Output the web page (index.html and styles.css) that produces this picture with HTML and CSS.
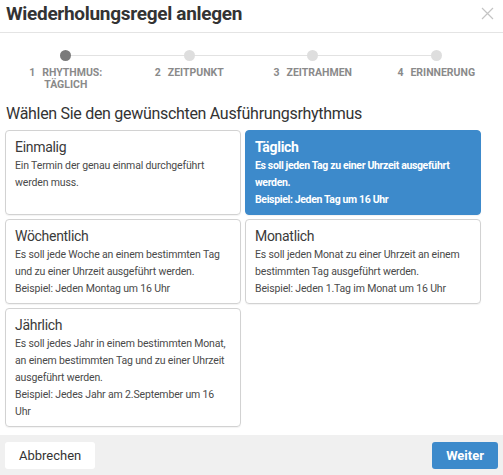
FILE: index.html
```html
<!DOCTYPE html>
<html lang="de">
<head>
    <meta charset="UTF-8">
    <meta name="viewport" content="width=device-width, initial-scale=1.0">
    <title>Wiederholungsregel anlegen</title>
    <link rel="stylesheet" href="styles.css">
</head>
<body>
    <div class="dialog">
        <header class="dialog-header">
            <h1>Wiederholungsregel anlegen</h1>
            <button class="close-btn" aria-label="Schließen">
                <svg width="13" height="13" viewBox="0 0 13 13">
                    <path d="M1 1 L12 12 M12 1 L1 12" stroke="#c4c4c4" stroke-width="1.2" fill="none"/>
                </svg>
            </button>
        </header>

        <!-- Schritte -->
        <ol class="stepper">
            <li class="step active">
                <span class="dot"></span>
                <span class="step-label"><span class="num">1</span>Rhythmus: täglich</span>
            </li>
            <li class="step">
                <span class="dot"></span>
                <span class="step-label"><span class="num">2</span>Zeitpunkt</span>
            </li>
            <li class="step">
                <span class="dot"></span>
                <span class="step-label"><span class="num">3</span>Zeitrahmen</span>
            </li>
            <li class="step">
                <span class="dot"></span>
                <span class="step-label"><span class="num">4</span>Erinnerung</span>
            </li>
        </ol>

        <h2 class="section-title">Wählen Sie den gewünschten Ausführungsrhythmus</h2>

        <div class="options">
            <div class="option">
                <div class="option-title">Einmalig</div>
                <p>Ein Termin der genau einmal durchgeführt werden muss.</p>
            </div>
            <div class="option selected">
                <div class="option-title">Täglich</div>
                <p>Es soll jeden Tag zu einer Uhrzeit ausgeführt werden.</p>
                <p>Beispiel: Jeden Tag um 16 Uhr</p>
            </div>
            <div class="option">
                <div class="option-title">Wöchentlich</div>
                <p>Es soll jede Woche an einem bestimmten Tag und zu einer Uhrzeit ausgeführt werden.</p>
                <p>Beispiel: Jeden Montag um 16 Uhr</p>
            </div>
            <div class="option">
                <div class="option-title">Monatlich</div>
                <p>Es soll jeden Monat zu einer Uhrzeit an einem bestimmten Tag ausgeführt werden.</p>
                <p>Beispiel: Jeden 1.Tag im Monat um 16 Uhr</p>
            </div>
            <div class="option">
                <div class="option-title">Jährlich</div>
                <p>Es soll jedes Jahr in einem bestimmten Monat, an einem bestimmten Tag und zu einer Uhrzeit ausgeführt werden.</p>
                <p>Beispiel: Jedes Jahr am 2.September um 16 Uhr</p>
            </div>
        </div>

        <footer class="dialog-footer">
            <button class="btn">Abbrechen</button>
            <button class="btn btn-primary">Weiter</button>
        </footer>
    </div>
</body>
</html>
```

FILE: styles.css
```css
/* Grundlayout */
:root {
    --blue: #3d8acb;
    --text: #3a3a3a;
    --muted: #8a8a8a;
    --border: #d2d2d2;
}

body {
    margin: 0;
    font-family: Roboto, "Liberation Sans", sans-serif;
    color: var(--text);
    background: white;
}

.dialog {
    width: 503px;
    height: 475px;
    display: flex;
    flex-direction: column;
    overflow: hidden;
}

/* Kopfzeile */
.dialog-header {
    display: flex;
    justify-content: space-between;
    align-items: center;
    height: 32px;
    padding: 0 9px 0 6px;
    border-bottom: 1px solid #e4e4e4;
}

.dialog-header h1 {
    margin: 0;
    font-size: 19px;
    letter-spacing: -0.3px;
    font-weight: bold;
    color: #333;
    line-height: 28px;
    margin-top: -4px;
}

.close-btn {
    background: none;
    border: none;
    padding: 0;
    margin-top: -6px;
    cursor: pointer;
    display: flex;
}

/* Schritte */
.stepper {
    list-style: none;
    margin: 17px 0 0;
    padding: 0 5px 0 4px;
    display: flex;
}

.step {
    flex: 1;
    position: relative;
    display: flex;
    flex-direction: column;
    align-items: center;
}

.step + .step::before {
    content: "";
    position: absolute;
    top: 5px;
    left: -50%;
    width: 100%;
    height: 1px;
    background: #e2e2e2;
}

.dot {
    width: 11px;
    height: 11px;
    border-radius: 50%;
    background: #dedede;
    position: relative;
    z-index: 1;
}

.step.active .dot {
    background: #7a7a7a;
}

.step-label {
    margin-top: 6px;
    max-width: 90px;
    text-align: center;
    text-transform: uppercase;
    font-size: 10.5px;
    font-weight: bold;
    line-height: 12px;
    color: var(--muted);
}

.num {
    margin-right: 7px;
}

.section-title {
    margin: 13px 0 0 6px;
    font-size: 16px;
    letter-spacing: -0.3px;
    font-weight: normal;
    color: #333;
    line-height: 20px;
}

/* Auswahlkarten */
.options {
    display: grid;
    grid-template-columns: 236px 236px;
    gap: 4px;
    margin: 6px 0 0 5px;
}

.option {
    border: 1px solid var(--border);
    border-radius: 4px;
    padding: 7px 9px 6px;
    font-size: 10.5px;
    letter-spacing: -0.15px;
    line-height: 17px;
    color: #4a4a4a;
    box-shadow: 0 1px 1px rgba(0,0,0,0.05);
}

.option p {
    margin: 0;
}

.option-title {
    font-size: 14px;
    letter-spacing: -0.3px;
    line-height: 19px;
    color: #3a3a3a;
}

.option.selected {
    background: var(--blue);
    border-color: var(--blue);
    color: white;
    font-weight: bold;
    letter-spacing: -0.35px;
}

.option.selected .option-title {
    color: white;
}

/* Fußzeile */
.dialog-footer {
    margin-top: auto;
    background: #f0f0f0;
    height: 40px;
    padding: 0 5px;
    display: flex;
    justify-content: space-between;
    align-items: center;
}

.btn {
    height: 27px;
    padding: 0 14px;
    border: none;
    border-radius: 3px;
    background: white;
    color: #333;
    font-family: inherit;
    font-size: 13px;
    cursor: pointer;
}

.btn-primary {
    background: var(--blue);
    color: white;
    font-weight: bold;
}
```
